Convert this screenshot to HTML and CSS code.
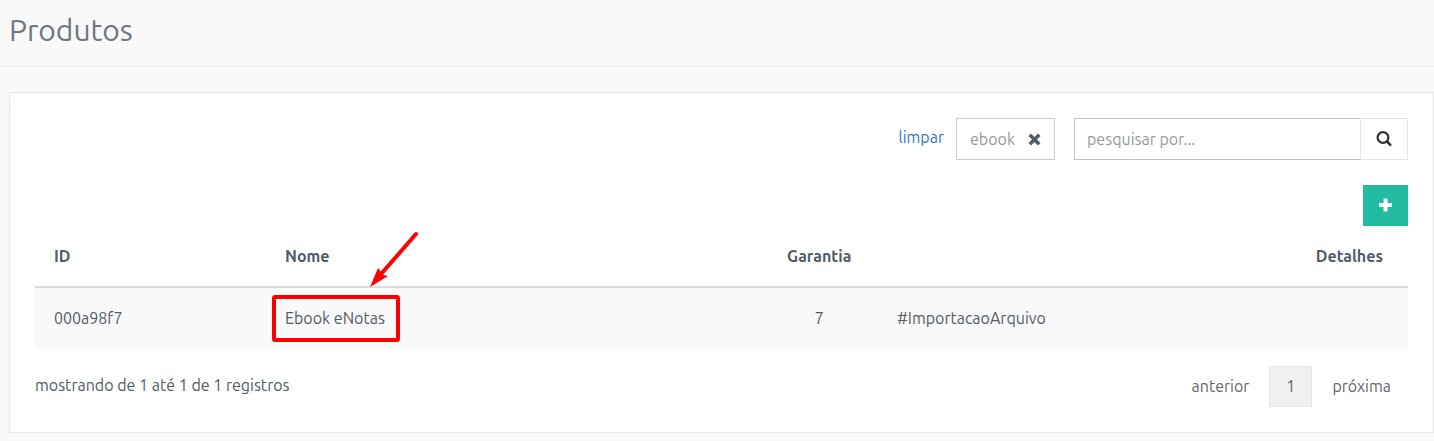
FILE: index.html
```html
<!DOCTYPE html>
<html lang="pt-BR">
<head>
  <meta charset="UTF-8">
  <meta name="viewport" content="width=device-width, initial-scale=1.0">
  <title>Produtos</title>
  <link rel="stylesheet" href="styles.css">
</head>
<body>
  <header class="page-header">
    <h1>Produtos</h1>
  </header>

  <main class="card">
    <form class="toolbar">
      <a class="clear-link" href="#">limpar</a>
      <div class="filter-tag">
        <span>ebook</span>
        <button type="button" class="tag-remove" aria-label="Remover filtro">
          <svg width="13" height="13" viewBox="0 0 13 13"><path d="M3 3l7 7M10 3l-7 7" stroke="currentColor" stroke-width="3.6" stroke-linecap="square"/></svg>
        </button>
      </div>
      <div class="search">
        <input type="text" class="search-input" placeholder="pesquisar por..." aria-label="pesquisar por">
        <button type="submit" class="search-button" aria-label="Pesquisar">
          <svg width="16" height="16" viewBox="0 0 16 16" fill="none" stroke="currentColor"><circle cx="7" cy="6.5" r="5.4" stroke-width="2.2"/><path d="M11 10.5l3.3 3.3" stroke-width="2.5" stroke-linecap="round"/></svg>
        </button>
      </div>
    </form>

    <div class="actions">
      <button type="button" class="add-button" aria-label="Adicionar">
        <svg width="14" height="16" viewBox="0 0 14 16"><path d="M6.5 2.5v9M2 7h9" stroke="currentColor" stroke-width="4" stroke-linecap="square" stroke-linejoin="round"/></svg>
      </button>
    </div>

    <table class="products">
      <thead>
        <tr>
          <th class="col-id">ID</th>
          <th class="col-name">Nome</th>
          <th class="col-warranty">Garantia</th>
          <th class="col-tag"></th>
          <th class="col-details">Detalhes</th>
        </tr>
      </thead>
      <tbody>
        <tr>
          <td>000a98f7</td>
          <td>
            <span class="highlight">Ebook eNotas
              <svg class="callout" width="150" height="114" viewBox="0 0 150 114">
                <rect x="4" y="67" width="124" height="43" rx="1" fill="none" stroke="#f00" stroke-width="4"/>
                <path d="M146 4L112 43" stroke="#f00" stroke-width="4" stroke-linecap="round"/>
                <path d="M100 57l8-19 3 4 3 3 4 1z" fill="#f00"/>
              </svg>
            </span>
          </td>
          <td class="col-warranty">7</td>
          <td>#ImportacaoArquivo</td>
          <td></td>
        </tr>
      </tbody>
    </table>

    <footer class="table-footer">
      <span>mostrando de 1 até 1 de 1 registros</span>
      <nav class="pagination" aria-label="Paginação">
        <a href="#">anterior</a>
        <a href="#" class="current" aria-current="page">1</a>
        <a href="#">próxima</a>
      </nav>
    </footer>
  </main>
</body>
</html>
```
FILE: styles.css
```css
* {
  box-sizing: border-box;
}

body {
  margin: 0;
  background-color: #f9f9f9;
  color: #515c66;
  font-family: Ubuntu, "Noto Sans", sans-serif;
  font-size: 16px;
  line-height: 20px;
}

button,
input {
  font: inherit;
}

svg {
  display: block;
}

.page-header {
  padding: 10px 9px 16px;
  border-bottom: 1px solid #e7e7e7;
}

h1 {
  margin: 0;
  color: #6f7780;
  font-size: 30px;
  font-weight: 400;
  line-height: 40px;
}

.card {
  margin: 25px 0 0 9px;
  padding: 25px;
  background-color: #fff;
  border: 1px solid #e7e7e7;
  box-shadow: 0 8px 8px -4px rgba(0, 0, 0, 0.06);
}

.toolbar {
  display: flex;
  justify-content: flex-end;
  align-items: center;
}

.clear-link {
  margin-right: 12px;
  padding-bottom: 4px;
  color: #337ab7;
  text-decoration: none;
}

.filter-tag {
  display: flex;
  align-items: center;
  gap: 13px;
  height: 42px;
  margin-right: 19px;
  padding: 0 13px;
  border: 1px solid #c8cccf;
  color: #999;
}

.tag-remove {
  padding: 0;
  background: none;
  border: 0;
  color: #4f5f6b;
  cursor: pointer;
}

.search {
  display: flex;
  width: 334px;
}

.search-input {
  flex: 1;
  min-width: 0;
  height: 42px;
  padding: 0 12px;
  background-color: #fff;
  border: 1px solid #bfc4c7;
  border-right: 0;
  border-radius: 0;
}

.search-input::placeholder {
  color: #999;
}

.search-button {
  display: flex;
  align-items: center;
  justify-content: center;
  width: 48px;
  padding: 0;
  background-color: #fff;
  border: 1px solid #e5e5e5;
  color: #2c3035;
  cursor: pointer;
}

.actions {
  display: flex;
  justify-content: flex-end;
  margin-top: 25px;
}

.add-button {
  display: flex;
  align-items: center;
  justify-content: center;
  width: 45px;
  height: 41px;
  padding: 0;
  background-color: #23baa2;
  border: 0;
  color: #fff;
  cursor: pointer;
}

.products {
  width: 100%;
  table-layout: fixed;
  border-collapse: separate;
  border-spacing: 0;
}

.products th,
.products td {
  padding: 19px 19px 20px;
  text-align: left;
}

.products th {
  height: 62px;
  border-bottom: 2px solid #ddd;
}

.products td {
  height: 61px;
  background-color: #f9f9f9;
}

.col-id {
  width: 231px;
}

.col-name {
  width: 36%;
}

.products .col-warranty {
  width: 118px;
  padding-left: 0;
  padding-right: 0;
  text-align: center;
}

.products .col-details {
  width: 10%;
  padding-right: 25px;
  text-align: right;
}

.highlight {
  position: relative;
}

/* red frame and arrow drawn over the product name */
.callout {
  position: absolute;
  left: -15px;
  bottom: -17px;
}

.table-footer {
  display: flex;
  align-items: flex-start;
  justify-content: space-between;
  margin-top: 17px;
  line-height: 39px;
}

.pagination {
  display: flex;
}

.pagination a {
  padding: 0 16px;
  border: 1px solid transparent;
  color: #666;
  text-decoration: none;
}

.pagination .current {
  margin: 0 3px;
  background-color: #f0f0f0;
  border-color: #e7e7e7;
}
```
